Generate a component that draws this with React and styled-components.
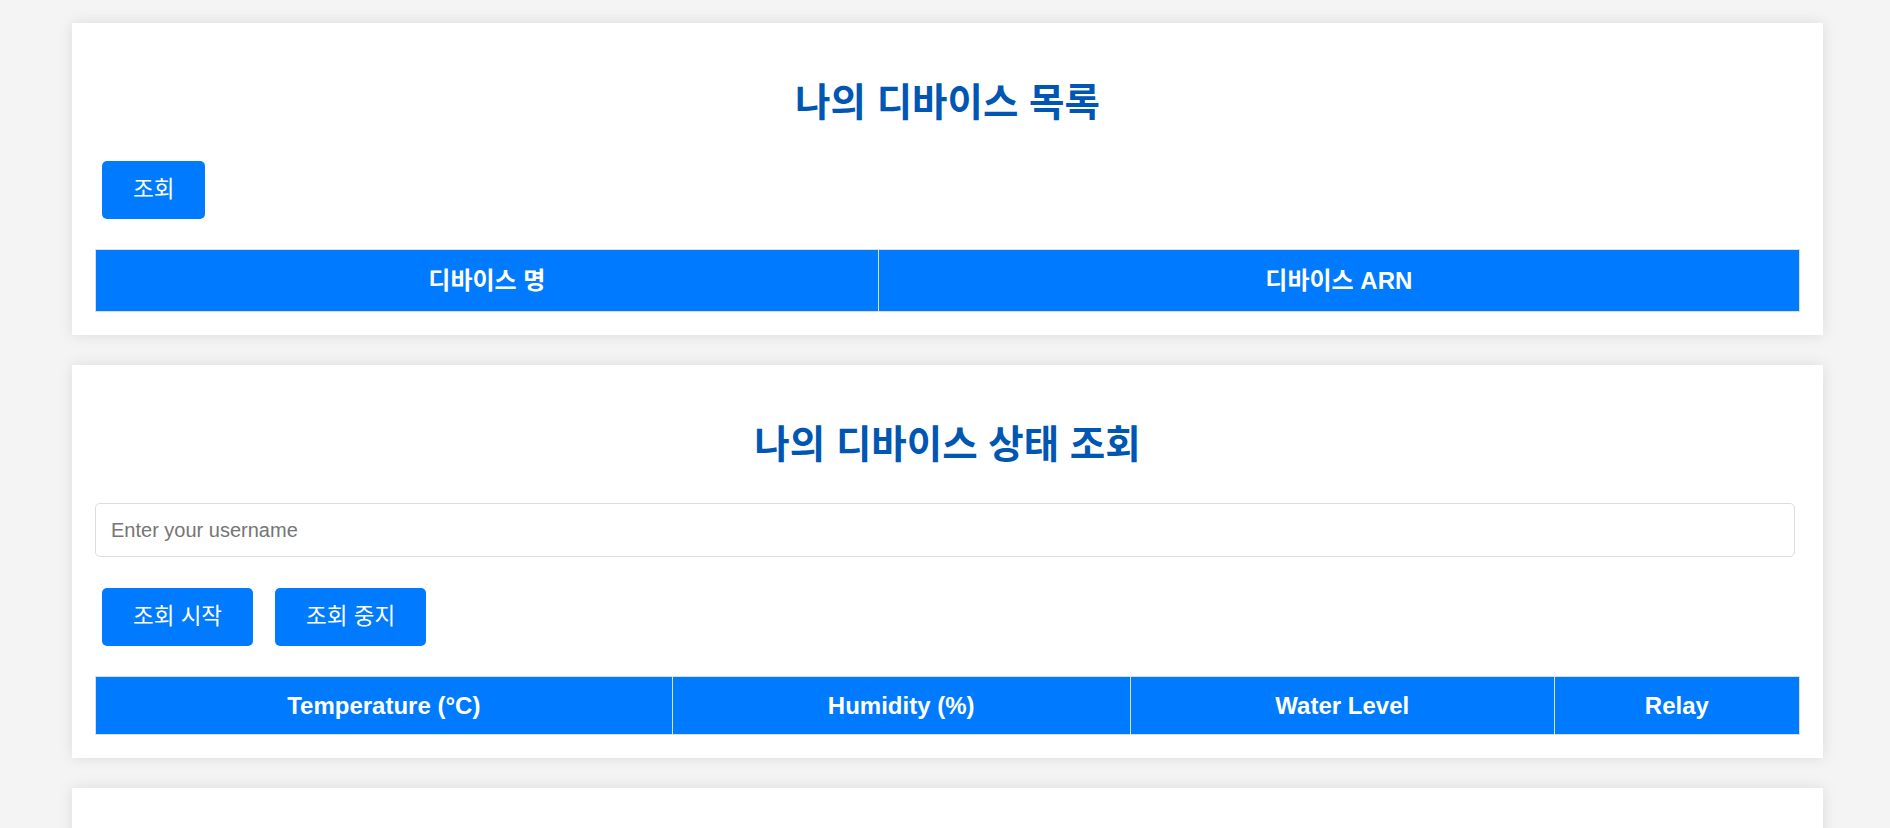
import React, { useState } from "react";
import styled, { createGlobalStyle } from "styled-components";

const GlobalStyle = createGlobalStyle`
  html, body {
    margin: 0;
    padding: 0;
    background-color: #f4f4f4;
    font-family: "Liberation Sans", Arial, "Noto Sans CJK KR", sans-serif;
  }
  * {
    box-sizing: border-box;
  }
`;

const Page = styled.div`
  display: flex;
  flex-direction: column;
  gap: 30px;
  padding: 23px 0 0 72px;
`;

const Card = styled.section`
  width: 1751px;
  min-height: ${(props) => props.$minHeight || "auto"};
  padding: 23px;
  background-color: #ffffff;
  box-shadow: 0 0 14px rgba(0, 0, 0, 0.1);
  display: flex;
  flex-direction: column;
`;

const Title = styled.h2`
  margin: 35px 0 36px;
  font-size: 38.5px;
  line-height: 44px;
  font-weight: bold;
  color: #0056b3;
  text-align: center;
`;

const ButtonRow = styled.div`
  display: flex;
  gap: 22px;
  padding-left: 7px;
  margin-top: ${(props) => props.$top || "0"};
`;

const Button = styled.button`
  padding: 15px 31px;
  font-family: "Liberation Sans", Arial, "Noto Sans CJK KR", sans-serif;
  font-size: 22.5px;
  line-height: 28px;
  color: #ffffff;
  background-color: #007bff;
  border: none;
  border-radius: 5px;
  cursor: pointer;

  &:hover {
    background-color: #0069d9;
  }
`;

const Input = styled.input`
  width: calc(100% - 5px);
  height: 54px;
  padding: 0 15px;
  font-family: "Liberation Sans", Arial, sans-serif;
  font-size: 20px;
  color: #333;
  border: 1px solid #dddddd;
  border-radius: 5px;
  outline: none;

  &::placeholder {
    color: #757575;
  }
`;

const Table = styled.table`
  width: 100%;
  margin-top: 30px;
  table-layout: fixed;
  border-collapse: separate;
  border-spacing: 0;
  border: 1px solid #dddddd;
`;

const HeadCell = styled.th`
  width: ${(props) => props.$width};
  padding: 15px 8px;
  line-height: ${(props) => props.$lineHeight}px;
  font-size: 24px;
  font-weight: bold;
  color: #ffffff;
  background-color: #007bff;
  text-align: center;

  & + & {
    border-left: 1px solid #dddddd;
  }
`;

const deviceColumns = [
  { label: "디바이스 명", width: "45.9%" },
  { label: "디바이스 ARN", width: "54.1%" },
];

const statusColumns = [
  { label: "Temperature (°C)", width: "33.8%" },
  { label: "Humidity (%)", width: "26.9%" },
  { label: "Water Level", width: "24.9%" },
  { label: "Relay", width: "14.4%" },
];

const HeaderTable = ({ columns, lineHeight }) => (
  <Table>
    <thead>
      <tr>
        {columns.map((col) => (
          <HeadCell key={col.label} $width={col.width} $lineHeight={lineHeight}>
            {col.label}
          </HeadCell>
        ))}
      </tr>
    </thead>
    <tbody></tbody>
  </Table>
);

const App = () => {
  const [username, setUsername] = useState("");

  return (
    <>
      <GlobalStyle />
      <Page>
        <Card>
          <Title>나의 디바이스 목록</Title>
          <ButtonRow>
            <Button>조회</Button>
          </ButtonRow>
          <HeaderTable columns={deviceColumns} lineHeight={31} />
        </Card>

        <Card>
          <Title>나의 디바이스 상태 조회</Title>
          <Input
            type="text"
            placeholder="Enter your username"
            value={username}
            onChange={(e) => setUsername(e.target.value)}
          />
          <ButtonRow $top="31px">
            <Button>조회 시작</Button>
            <Button>조회 중지</Button>
          </ButtonRow>
          <HeaderTable columns={statusColumns} lineHeight={27} />
        </Card>

        {/* next panel starts just above the bottom edge; its content is off-screen */}
        <Card $minHeight="320px" />
      </Page>
    </>
  );
};

export default App;
